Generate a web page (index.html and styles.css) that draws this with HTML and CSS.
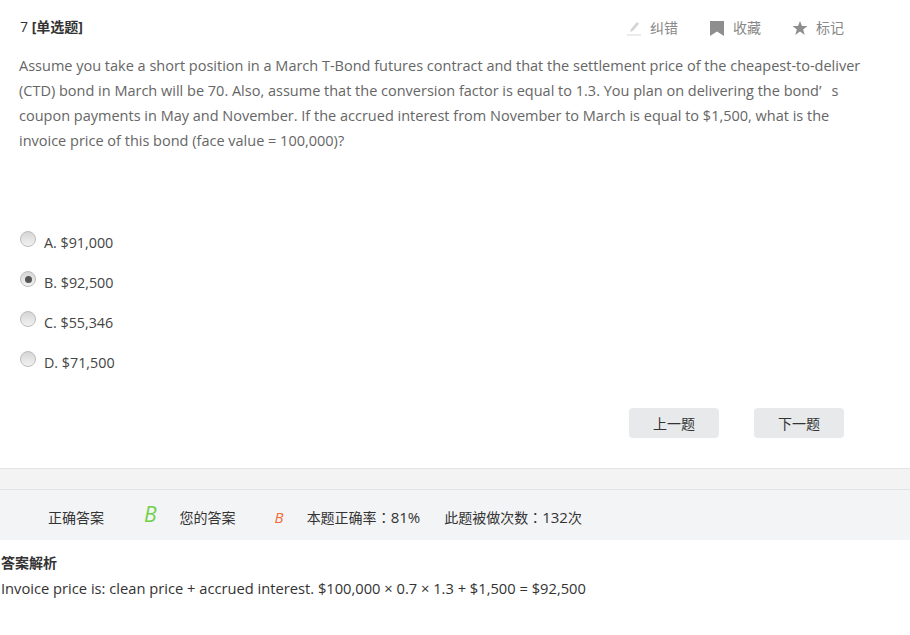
FILE: index.html
```html
<!DOCTYPE html>
<html lang="zh-CN">
<head>
    <meta charset="UTF-8">
    <title>7 [单选题]</title>
    <link rel="stylesheet" href="styles.css">
</head>
<body>
    <div class="question">
        <div class="question-head">
            <div class="question-title">7 <b>[单选题]</b></div>
            <div class="tools">
                <span class="tool">
                    <svg class="tool-icon" width="16" height="16" viewBox="0 0 16 16"><path d="M1 15h14" stroke="#ddd" stroke-width="1.2" fill="none"/><path d="M4 12l1-3 6-7 2 1.700-6 7z" fill="#d4d4d4"/></svg>
                    纠错
                </span>
                <span class="tool">
                    <svg class="tool-icon" width="16" height="16" viewBox="0 0 16 16"><path d="M1 1h14v15l-7-4.500-7 4.500z" fill="#8e8e8e"/></svg>
                    收藏
                </span>
                <span class="tool">
                    <svg class="tool-icon" width="16" height="16" viewBox="0 0 16 16"><path d="M8 1l2 5h5.500l-4.400 3.400 1.700 5.600-4.800-3.400-4.800 3.400 1.700-5.600-4.400-3.400h5.500z" fill="#8e8e8e"/></svg>
                    标记
                </span>
            </div>
        </div>

        <p class="question-text">Assume you take a short position in a March T-Bond futures contract and that the settlement price of the cheapest-to-deliver (CTD) bond in March will be 70. Also, assume that the conversion factor is equal to 1.3. You plan on delivering the bond’<span class="quote-gap"></span>s coupon payments in May and November. If the accrued interest from November to March is equal to $1,500, what is the invoice price of this bond (face value = 100,000)?</p>

        <ul class="options">
            <li class="option"><span class="radio"></span>A. $91,000</li>
            <li class="option"><span class="radio checked"></span>B. $92,500</li>
            <li class="option"><span class="radio"></span>C. $55,346</li>
            <li class="option"><span class="radio"></span>D. $71,500</li>
        </ul>

        <div class="pager">
            <button class="pager-btn">上一题</button>
            <button class="pager-btn">下一题</button>
        </div>
    </div>

    <div class="divider"></div>

    <div class="result">
        <span class="result-label">正确答案</span>
        <span class="mark-right">B</span>
        <span class="result-label">您的答案</span>
        <span class="mark-mine">B</span>
        <span class="result-label">本题正确率<span class="colon" lang="zh-TW">：</span><span class="num">81%</span></span>
        <span class="result-label">此题被做次数<span class="colon" lang="zh-TW">：</span><span class="num">132</span>次</span>
    </div>

    <div class="analysis">
        <h4>答案解析</h4>
        <p>Invoice price is: clean price + accrued interest. $100,000 × 0.7 × 1.3 + $1,500 = $92,500</p>
    </div>
</body>
</html>
```
FILE: styles.css
```css
body {
    margin: 0;
    background-color: white;
    color: #333;
    font-family: "Open Sans", "Noto Sans CJK SC", sans-serif;
    font-size: 14px;
}

.question {
    padding: 17px 46px 0 19px;
}

.question-head {
    display: flex;
    justify-content: space-between;
    height: 20px;
    line-height: 20px;
}

.question-title {
    margin-left: 1px;
}

.tools {
    display: flex;
    gap: 31px;
    margin-top: 1px;
    margin-right: 20px;
    color: #888;
}

.tool {
    display: flex;
    align-items: center;
    gap: 8px;
}

.question-text {
    margin: 16px 0 0;
    width: 845px;
    color: #666;
    font-size: 14.5px;
    line-height: 25px;
}

.quote-gap {
    display: inline-block;
    width: 10px;
}

.options {
    list-style: none;
    margin: 69px 0 0;
    padding: 0;
}

.option {
    display: flex;
    align-items: center;
    height: 40px;
    color: #444;
    font-size: 14.3px;
}

.radio {
    width: 14px;
    height: 14px;
    margin: -6px 8px 0 1px;
    border: 1px solid #bbb;
    border-radius: 50%;
    background: linear-gradient(#d6d6d6, #f2f2f2);
    display: flex;
    align-items: center;
    justify-content: center;
}

.radio.checked::after {
    content: "";
    width: 7px;
    height: 7px;
    border-radius: 50%;
    background-color: #555;
}

.pager {
    display: flex;
    justify-content: flex-end;
    gap: 35px;
    margin-top: 26px;
    margin-right: 20px;
}

.pager-btn {
    width: 90px;
    height: 30px;
    border: none;
    border-radius: 4px;
    background-color: #e8e9eb;
    color: #333;
    font-family: inherit;
    font-size: 14px;
}

.divider {
    height: 20px;
    margin-top: 30px;
    background-color: #f3f3f3;
    border-top: 1px solid #e3e3e3;
    border-bottom: 1px solid #e3e3e3;
}

.result {
    display: flex;
    align-items: center;
    box-sizing: border-box;
    height: 50px;
    padding: 4px 0 0 48px;
    background-color: #f3f4f6;
    font-size: 14px;
}

.mark-right {
    margin: -6px 23px 0 40px;
    color: #6fd14a;
    font-size: 21px;
    font-style: italic;
}

.mark-mine {
    margin: 0 23px 0 39px;
    color: #f06a35;
    font-size: 15px;
    font-style: italic;
}

.colon {
    font-family: "Noto Sans CJK TC", sans-serif;
}

.num {
    font-size: 15px;
}

.result-label + .result-label {
    margin-left: 24px;
}

.analysis {
    padding: 13px 0 0 1px;
}

.analysis h4 {
    margin: 0;
    font-size: 14px;
    line-height: 20px;
}

.analysis p {
    margin: 5px 0 0;
    color: #333;
    font-size: 14.7px;
    line-height: 20px;
}
```
